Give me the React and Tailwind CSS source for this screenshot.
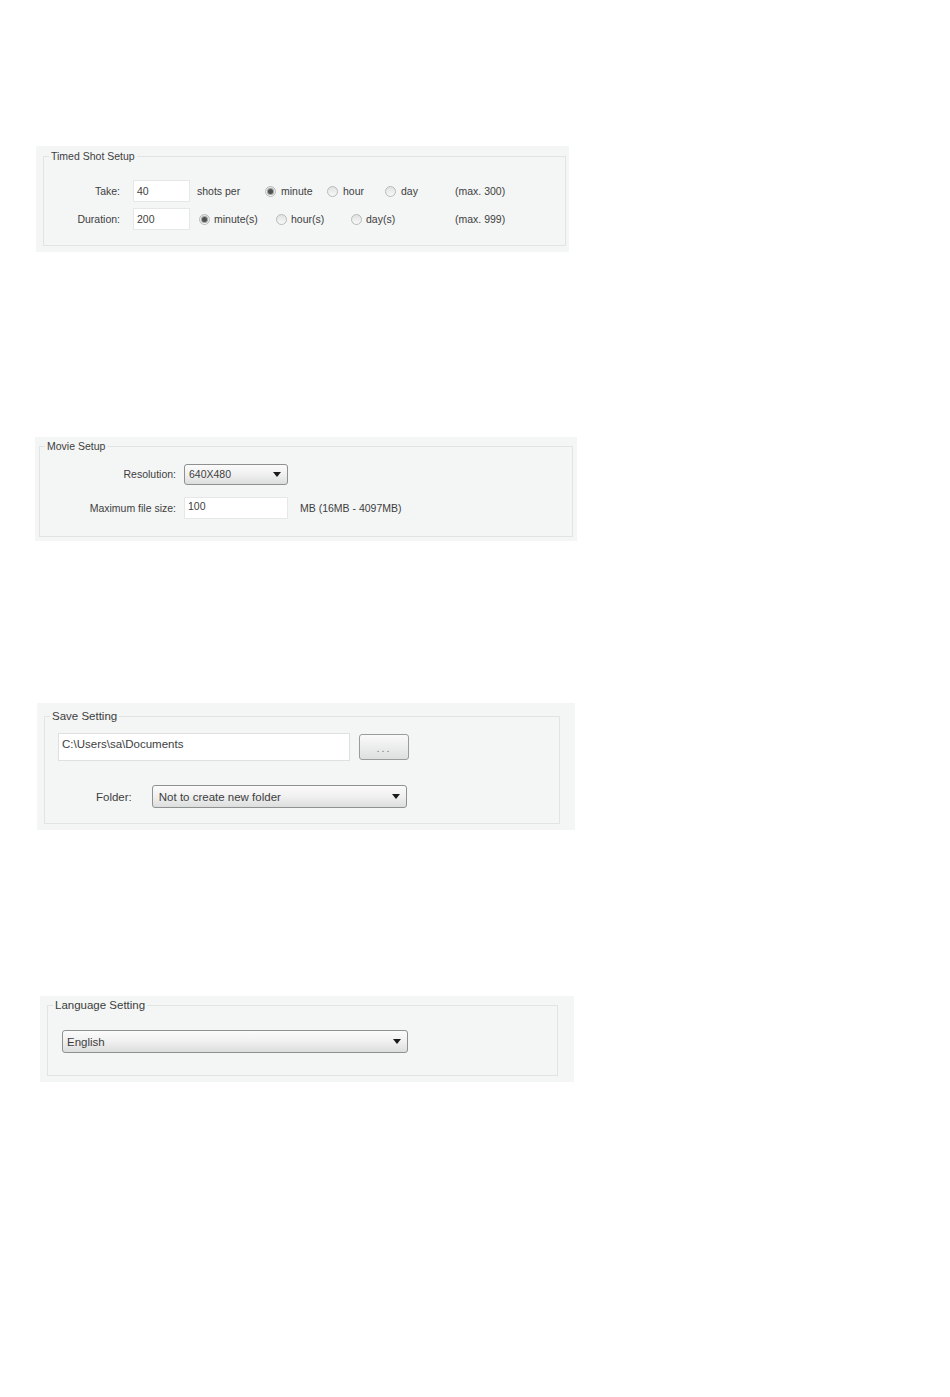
import React from 'react';

const font = { fontFamily: '"Liberation Sans", Arial, sans-serif' };

function Radio({ checked, label, width, gap = 'gap-[5px]' }) {
  return (
    <div className={`flex items-center ${gap} ${width}`}>
      <span className="w-[11px] h-[11px] rounded-full border border-[#b8baba] bg-gradient-to-b from-[#e0e2e2] to-[#f8f8f8] flex items-center justify-center shrink-0">
        {checked && <span className="w-[5px] h-[5px] rounded-full bg-[#505252] ring-1 ring-[#9fa1a1]" />}
      </span>
      <span>{label}</span>
    </div>
  );
}

function Select({ value, className }) {
  return (
    <div
      className={`flex items-center justify-between border border-[#8f9191] rounded-[3px] bg-gradient-to-b from-[#fbfbfb] via-[#f0f0f0] to-[#dcdddd] pl-[4px] pr-[6px] ${className}`}
    >
      <span>{value}</span>
      <svg width="8" height="5" viewBox="0 0 8 5" aria-hidden="true">
        <path d="M0 0 H8 L4 5 Z" fill="#1a1a1a" />
      </svg>
    </div>
  );
}

export default function App() {
  return (
    <div className="bg-white min-h-[1397px] w-[950px] flex flex-col text-[#3d3e3e]" style={font}>
      {/* Timed Shot Setup */}
      <div className="ml-[36px] mt-[146px] w-[533px] h-[106px] bg-[#f4f5f5] pt-[4px] pl-[7px] pr-[3px] text-[10.5px] leading-[13px]">
        <fieldset className="border border-[#e2e4e4] h-[96px]">
          <legend className="ml-[5px] px-[2px]">Timed Shot Setup</legend>
          <div className="mt-[17px] flex flex-col gap-[6px]">
            <div className="flex items-center">
              <span className="w-[76px] text-right">Take:</span>
              <div className="ml-[13px] w-[57px] h-[22px] bg-white border border-[#e6e8e8] pl-[3px] flex items-center">40</div>
              <span className="ml-[7px] w-[68px]">shots per</span>
              <Radio checked label="minute" width="w-[62px]" />
              <Radio label="hour" width="w-[58px]" />
              <Radio label="day" width="w-[70px]" />
              <span>(max. 300)</span>
            </div>
            <div className="flex items-center">
              <span className="w-[76px] text-right">Duration:</span>
              <div className="ml-[13px] w-[57px] h-[22px] bg-white border border-[#e6e8e8] pl-[3px] flex items-center">200</div>
              <div className="ml-[9px] flex items-center">
                <Radio checked label="minute(s)" width="w-[77px]" gap="gap-[4px]" />
                <Radio label="hour(s)" width="w-[75px]" gap="gap-[4px]" />
                <Radio label="day(s)" width="w-[104px]" gap="gap-[4px]" />
              </div>
              <span>(max. 999)</span>
            </div>
          </div>
        </fieldset>
      </div>

      {/* Movie Setup */}
      <div className="ml-[35px] mt-[185px] w-[542px] h-[104px] bg-[#f4f5f5] pt-[3px] pl-[4px] pr-[4px] text-[10.5px] leading-[13px]">
        <fieldset className="border border-[#e2e4e4] h-[97px]">
          <legend className="ml-[5px] px-[2px]">Movie Setup</legend>
          <div className="mt-[11px] flex flex-col gap-[12px]">
            <div className="flex items-center">
              <span className="w-[136px] text-right">Resolution:</span>
              <Select value="640X480" className="ml-[8px] w-[104px] h-[21px]" />
            </div>
            <div className="flex items-center">
              <span className="w-[136px] text-right">Maximum file size:</span>
              <div className="ml-[8px] w-[104px] h-[22px] bg-white border border-[#e6e8e8] pl-[3px] pb-[3px] flex items-center">100</div>
              <span className="ml-[12px]">MB (16MB - 4097MB)</span>
            </div>
          </div>
        </fieldset>
      </div>

      {/* Save Setting */}
      <div className="ml-[37px] mt-[162px] w-[538px] h-[127px] bg-[#f4f5f5] pt-[6px] pl-[7px] pr-[15px] text-[11.5px] leading-[14px]">
        <fieldset className="border border-[#e2e4e4] h-[115px]">
          <legend className="ml-[5px] px-[2px]">Save Setting</legend>
          <div className="mt-[10px] flex items-start ml-[13px]">
            <div className="w-[292px] h-[28px] bg-white border border-[#dfe1e1] pl-[3px] pt-[3px]">C:\Users\sa\Documents</div>
            <button className="ml-[9px] mt-[1px] w-[50px] h-[26px] border border-[#9a9c9c] rounded-[3px] bg-gradient-to-b from-[#fafafa] to-[#dedfdf] text-[#7a7b7b] text-[11px] tracking-[2px] leading-none pt-[2px]">
              ...
            </button>
          </div>
          <div className="mt-[24px] flex items-center ml-[51px]">
            <span>Folder:</span>
            <Select value="Not to create new folder" className="ml-[20px] w-[255px] h-[23px] pl-[6px]" />
          </div>
        </fieldset>
      </div>

      {/* Language Setting */}
      <div className="ml-[40px] mt-[166px] w-[534px] h-[86px] bg-[#f4f5f5] pt-[2px] pl-[7px] pr-[16px] text-[11.5px] leading-[14px]">
        <fieldset className="border border-[#e2e4e4] h-[78px]">
          <legend className="ml-[5px] px-[2px]">Language Setting</legend>
          <Select value="English" className="mt-[18px] ml-[14px] w-[346px] h-[23px] pl-[2px]" />
        </fieldset>
      </div>
    </div>
  );
}
